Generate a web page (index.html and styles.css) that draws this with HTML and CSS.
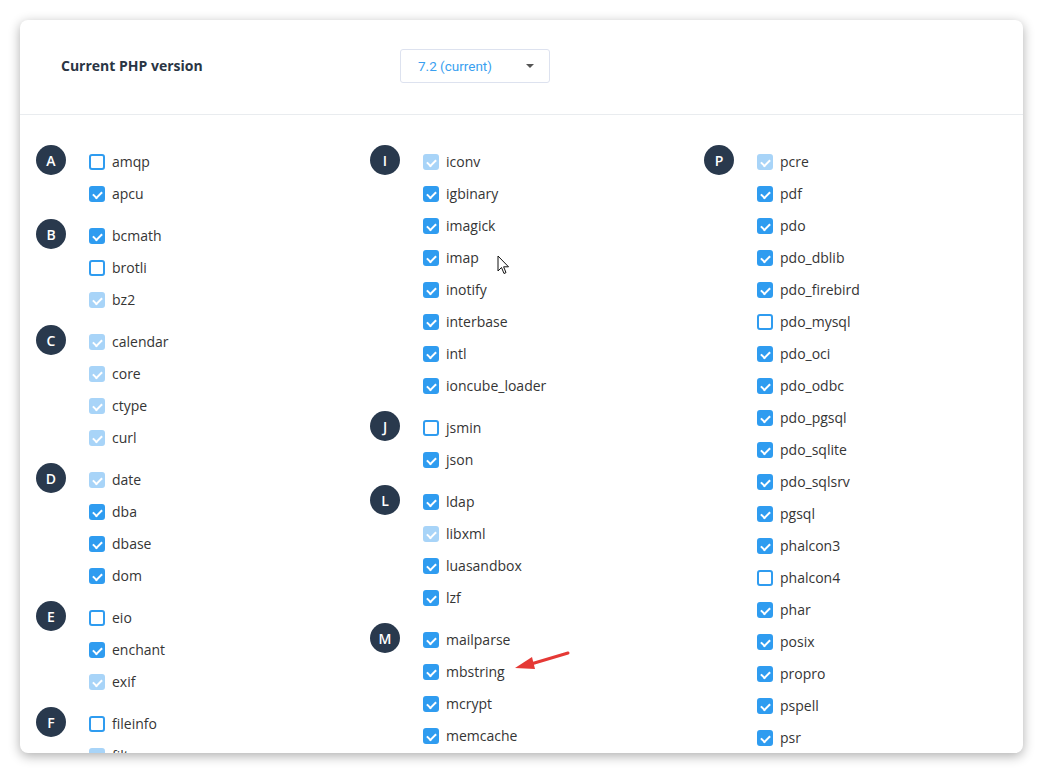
FILE: index.html
```html
<!DOCTYPE html>
<html>
<head>
<meta charset="utf-8">
<link rel="stylesheet" href="styles.css">
</head>
<body>
<div class="card">
  <div class="header">
    <div class="title">Current PHP version</div>
    <div class="select"><span>7.2 (current)</span><span class="caret"></span></div>
  </div>
  <div class="body">
    <div class="col">
      <div class="group"><div class="letter">A</div><ul>
        <li><span class="cb"></span>amqp</li>
        <li><span class="cb on"></span>apcu</li></ul></div>
      <div class="group"><div class="letter">B</div><ul>
        <li><span class="cb on"></span>bcmath</li>
        <li><span class="cb"></span>brotli</li>
        <li><span class="cb dis"></span>bz2</li></ul></div>
      <div class="group"><div class="letter">C</div><ul>
        <li><span class="cb dis"></span>calendar</li>
        <li><span class="cb dis"></span>core</li>
        <li><span class="cb dis"></span>ctype</li>
        <li><span class="cb dis"></span>curl</li></ul></div>
      <div class="group"><div class="letter">D</div><ul>
        <li><span class="cb dis"></span>date</li>
        <li><span class="cb on"></span>dba</li>
        <li><span class="cb on"></span>dbase</li>
        <li><span class="cb on"></span>dom</li></ul></div>
      <div class="group"><div class="letter">E</div><ul>
        <li><span class="cb"></span>eio</li>
        <li><span class="cb on"></span>enchant</li>
        <li><span class="cb dis"></span>exif</li></ul></div>
      <div class="group"><div class="letter">F</div><ul>
        <li><span class="cb"></span>fileinfo</li>
        <li><span class="cb dis"></span>filter</li></ul></div>
    </div>
    <div class="col">
      <div class="group"><div class="letter">I</div><ul>
        <li><span class="cb dis"></span>iconv</li>
        <li><span class="cb on"></span>igbinary</li>
        <li><span class="cb on"></span>imagick</li>
        <li><span class="cb on"></span>imap</li>
        <li><span class="cb on"></span>inotify</li>
        <li><span class="cb on"></span>interbase</li>
        <li><span class="cb on"></span>intl</li>
        <li><span class="cb on"></span>ioncube_loader</li></ul></div>
      <div class="group"><div class="letter">J</div><ul>
        <li><span class="cb"></span>jsmin</li>
        <li><span class="cb on"></span>json</li></ul></div>
      <div class="group"><div class="letter">L</div><ul>
        <li><span class="cb on"></span>ldap</li>
        <li><span class="cb dis"></span>libxml</li>
        <li><span class="cb on"></span>luasandbox</li>
        <li><span class="cb on"></span>lzf</li></ul></div>
      <div class="group"><div class="letter">M</div><ul>
        <li><span class="cb on"></span>mailparse</li>
        <li><span class="cb on"></span>mbstring</li>
        <li><span class="cb on"></span>mcrypt</li>
        <li><span class="cb on"></span>memcache</li></ul></div>
    </div>
    <div class="col">
      <div class="group"><div class="letter">P</div><ul>
        <li><span class="cb dis"></span>pcre</li>
        <li><span class="cb on"></span>pdf</li>
        <li><span class="cb on"></span>pdo</li>
        <li><span class="cb on"></span>pdo_dblib</li>
        <li><span class="cb on"></span>pdo_firebird</li>
        <li><span class="cb"></span>pdo_mysql</li>
        <li><span class="cb on"></span>pdo_oci</li>
        <li><span class="cb on"></span>pdo_odbc</li>
        <li><span class="cb on"></span>pdo_pgsql</li>
        <li><span class="cb on"></span>pdo_sqlite</li>
        <li><span class="cb on"></span>pdo_sqlsrv</li>
        <li><span class="cb on"></span>pgsql</li>
        <li><span class="cb on"></span>phalcon3</li>
        <li><span class="cb"></span>phalcon4</li>
        <li><span class="cb on"></span>phar</li>
        <li><span class="cb on"></span>posix</li>
        <li><span class="cb on"></span>propro</li>
        <li><span class="cb on"></span>pspell</li>
        <li><span class="cb on"></span>psr</li></ul></div>
    </div>
  </div>
  <svg class="cursor" width="14" height="22" viewBox="0 0 14 22"><path d="M1 1 L1 16 L4.5 12.5 L7 18.5 L9 17.6 L6.6 11.8 L11.5 11.8 Z" fill="#fff" stroke="#111" stroke-width="1"/></svg>
  <svg class="pointer" width="60" height="24" viewBox="0 0 60 24"><path d="M55 3 L18 14" stroke="#e53935" stroke-width="3" stroke-linecap="round"/><path d="M2 18 L19 7 L22 19 Z" fill="#e53935"/></svg>
</div>
</body>
</html>
```

FILE: styles.css
```css
html, body {
  margin: 0;
  padding: 0;
  background: #ffffff;
}
body {
  font-family: "Open Sans", "Liberation Sans", sans-serif;
  color: #333;
}
.card {
  position: relative;
  margin: 20px;
  width: 1003px;
  height: 733px;
  background: #fff;
  border-radius: 8px;
  box-shadow: 0 3px 12px rgba(0, 0, 0, 0.32);
  overflow: hidden;
}
.header {
  border-bottom: 1px solid #e9ecef;
  display: flex;
  align-items: center;
  padding-left: 41px;
  box-sizing: border-box;
  height: 95px;
}
.title {
  width: 339px;
  font-size: 14px;
  font-weight: 700;
  color: #2a3544;
  margin-top: -3px;
}
.select {
  width: 150px;
  height: 34px;
  box-sizing: border-box;
  border: 1px solid #dde2ef;
  border-radius: 3px;
  display: flex;
  align-items: center;
  justify-content: space-between;
  padding: 0 15px 0 17px;
  font-family: Roboto, "Open Sans", sans-serif;
  font-size: 13.5px;
  color: #3a9ff0;
  margin-top: -3px;
}
.caret {
  width: 0;
  height: 0;
  border-left: 4px solid transparent;
  border-right: 4px solid transparent;
  border-top: 4px solid #555;
  margin-top: 1px;
}
.body {
  display: grid;
  grid-template-columns: 334px 334px 334px;
  padding: 31px 0 0 16px;
}
.group {
  display: flex;
  align-items: flex-start;
  margin-bottom: 10px;
}
.letter {
  width: 30px;
  height: 30px;
  border-radius: 50%;
  background: #29394d;
  color: #fff;
  font-size: 14px;
  font-weight: 600;
  display: flex;
  align-items: center;
  justify-content: center;
  margin-right: 23px;
  margin-top: -1px;
  flex: none;
}
ul {
  list-style: none;
  margin: 0;
  padding: 0;
}
li {
  height: 32px;
  display: flex;
  align-items: center;
  font-size: 14px;
  color: #353535;
  line-height: 1;
}
.cb {
  width: 16px;
  height: 16px;
  box-sizing: border-box;
  border: 2px solid #2f9cf0;
  border-radius: 3px;
  margin-right: 7px;
  flex: none;
  position: relative;
  background: #fff;
}
.cb.on {
  background: #2f9cf0;
}
.cb.dis {
  background: #a8d4f8;
  border-color: #a8d4f8;
}
.cb.on::after, .cb.dis::after {
  content: "";
  position: absolute;
  left: 3px;
  top: 1px;
  width: 7px;
  height: 4px;
  border-left: 2px solid #fff;
  border-bottom: 2px solid #fff;
  transform: translate(-1px, 2px) rotate(-45deg);
  transform-origin: center;
}
.cursor {
  position: absolute;
  left: 477px;
  top: 235px;
}
.pointer {
  position: absolute;
  left: 493px;
  top: 630px;
}
```
